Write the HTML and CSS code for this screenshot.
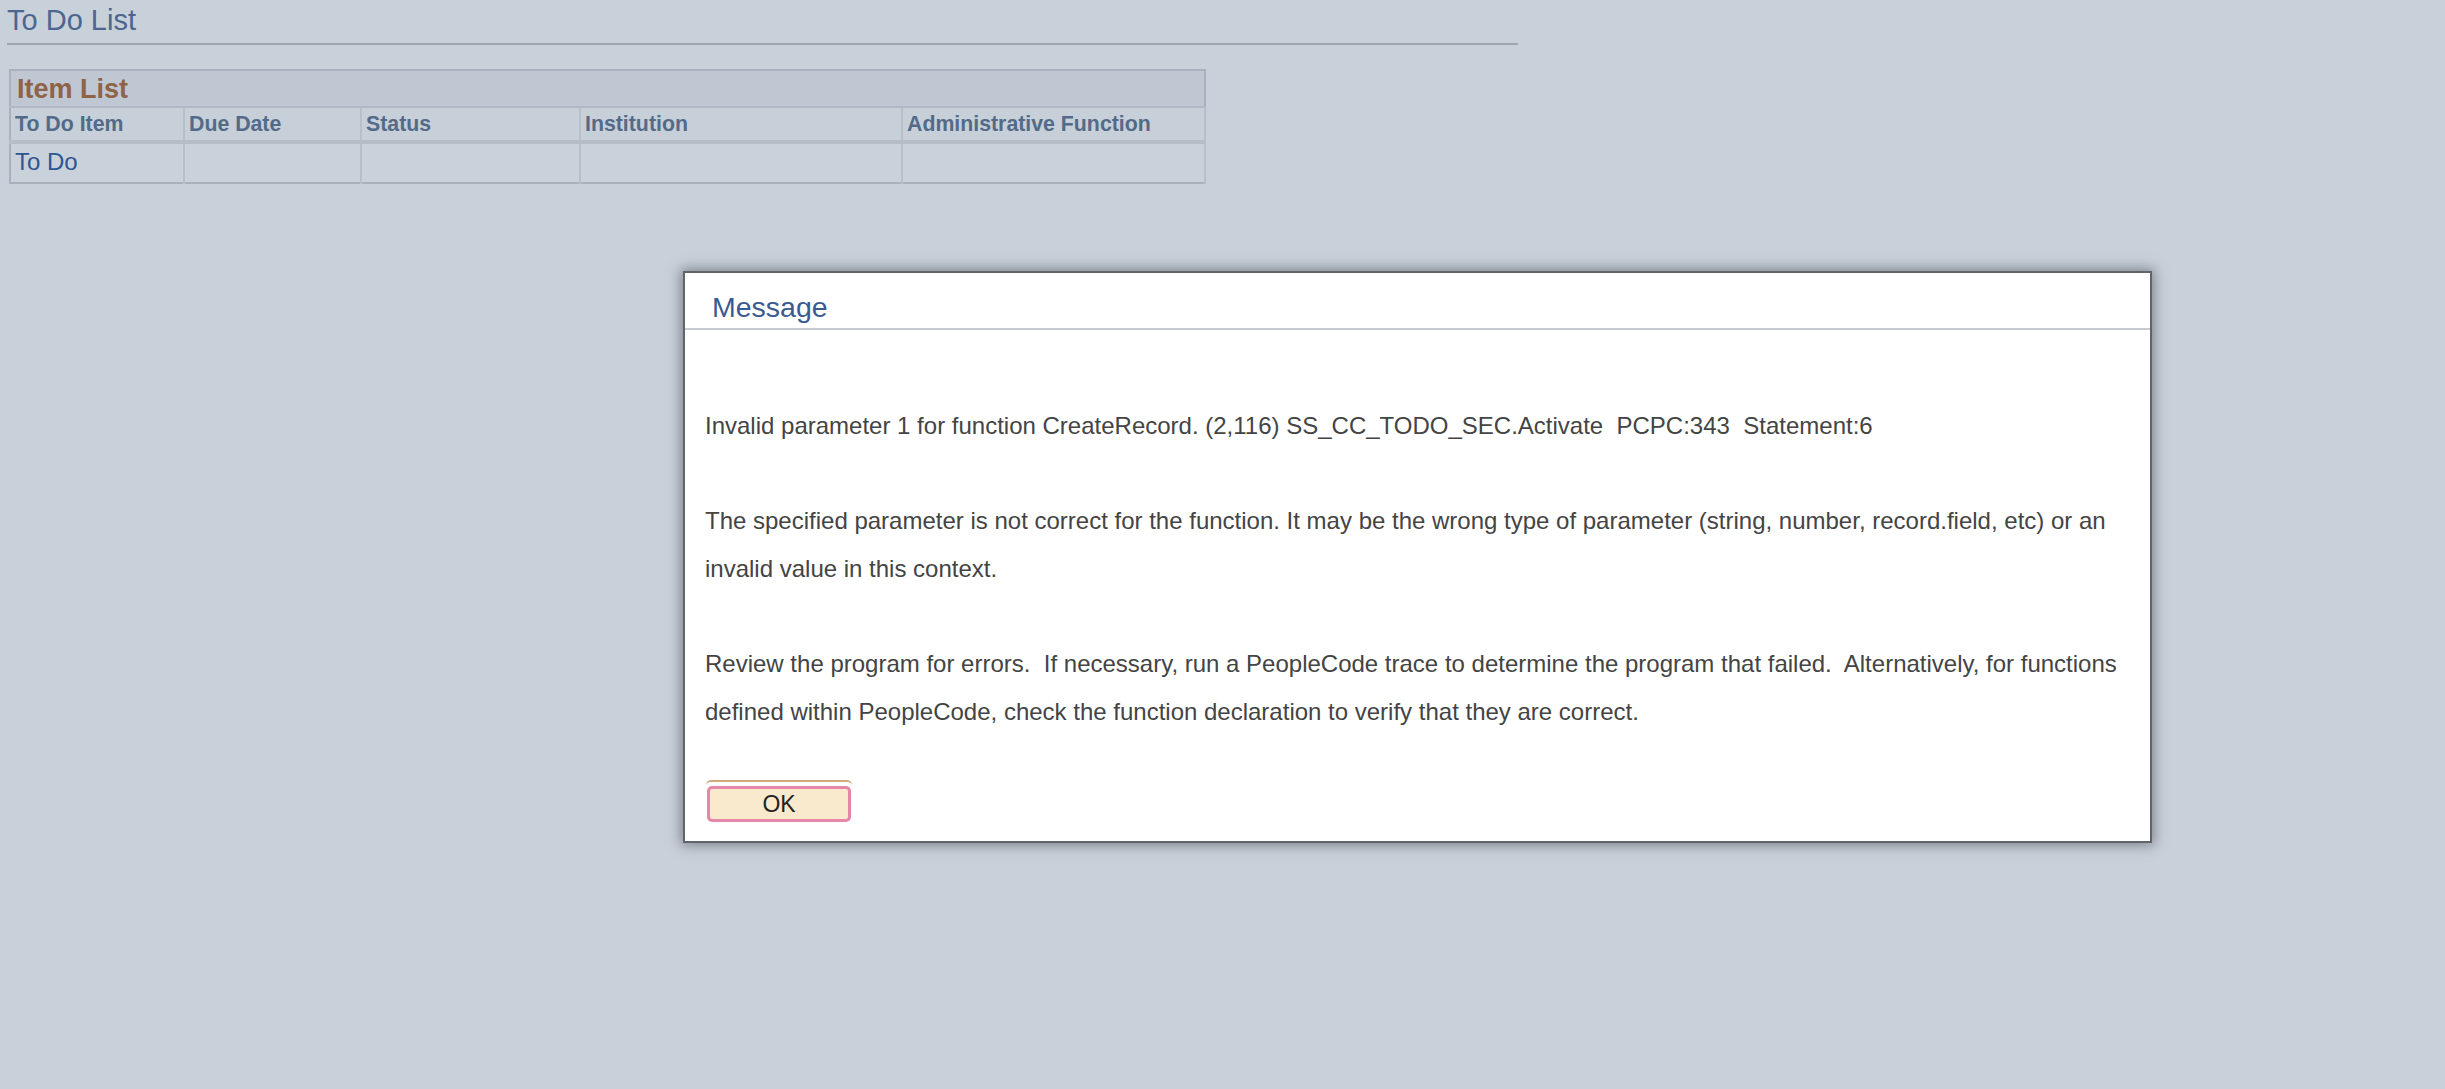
FILE: index.html
```html
<!DOCTYPE html>
<html lang="en">
<head>
<meta charset="utf-8">
<title>To Do List</title>
<link rel="stylesheet" href="styles.css">
</head>
<body>
<div class="page">
  <h1 class="page-title">To Do List</h1>
  <table class="grid">
    <colgroup>
      <col class="c1"><col class="c2"><col class="c3"><col class="c4"><col class="c5">
    </colgroup>
    <thead>
      <tr class="grid-title"><th colspan="5">Item List</th></tr>
      <tr class="grid-head">
        <th>To Do Item</th><th>Due Date</th><th>Status</th><th>Institution</th><th>Administrative Function</th>
      </tr>
    </thead>
    <tbody>
      <tr class="grid-row">
        <td><a href="#" class="link">To Do</a></td><td></td><td></td><td></td><td></td>
      </tr>
    </tbody>
  </table>
</div>

<div class="dialog" role="dialog">
  <div class="dialog-title">Message</div>
  <div class="dialog-body">
    <p class="msg">Invalid parameter 1 for function CreateRecord. (2,116) SS_CC_TODO_SEC.Activate  PCPC:343  Statement:6</p>
    <p class="msg">The specified parameter is not correct for the function. It may be the wrong type of parameter (string, number, record.field, etc) or an invalid value in this context.</p>
    <p class="msg">Review the program for errors.  If necessary, run a PeopleCode trace to determine the program that failed.  Alternatively, for functions defined within PeopleCode, check the function declaration to verify that they are correct.</p>
    <div class="btn-wrap"><button class="btn" type="button">OK</button></div>
  </div>
</div>
</body>
</html>
```
FILE: styles.css
```css
html, body {
  margin: 0;
  padding: 0;
  background: #c8d0da;
  font-family: "Liberation Sans", Arial, sans-serif;
}

.page {
  padding: 4px 0 0 7px;
}

.page-title {
  margin: 0;
  width: 1511px;
  font-size: 29px;
  font-weight: normal;
  line-height: 33px;
  color: #4d6690;
  padding-bottom: 6px;
  border-bottom: 2px solid #9ea5b0;
}

.grid {
  margin: 24px 0 0 2px;
  width: 1197px;
  table-layout: fixed;
  border-collapse: collapse;
  border: 2px solid #a9b1bc;
}

.c1 { width: 174px; }
.c2 { width: 177px; }
.c3 { width: 219px; }
.c4 { width: 322px; }
.c5 { width: auto; }

.grid-title th {
  background: #bfc7d2;
  color: #8e6346;
  font-size: 27px;
  font-weight: bold;
  text-align: left;
  height: 35px;
  padding: 0 0 0 6px;
  border-bottom: 2px solid #b1b9c4;
  line-height: 30px;
}

.grid-head th {
  background: #c7cfd9;
  color: #536a88;
  font-size: 21.3px;
  font-weight: bold;
  text-align: left;
  height: 32px;
  padding: 0 0 0 4px;
  border-right: 2px solid #b7bfc9;
  border-bottom: 4px solid #b5bdc7;
  line-height: 24px;
}

.grid-row td {
  background: #c9d1db;
  height: 36px;
  padding: 0 0 2px 4px;
  border-right: 2px solid #b7bfc9;
  font-size: 24px;
  line-height: 28px;
}

.link {
  color: #2d5591;
  text-decoration: none;
}

.dialog {
  position: absolute;
  left: 683px;
  top: 271px;
  width: 1465px;
  background: #ffffff;
  border: 2px solid #616469;
  box-shadow: 0 0 12px 2px rgba(60, 64, 72, 0.55);
}

.dialog-title {
  padding: 18px 0 4px 27px;
  font-size: 28.5px;
  line-height: 33px;
  color: #3b5a8f;
  border-bottom: 2px solid #c6cbd2;
}

.dialog-body {
  padding: 72px 20px 19px 20px;
}

.msg {
  margin: 0 0 47.7px 0;
  font-size: 24px;
  line-height: 47.7px;
  color: #444444;
  white-space: pre-wrap;
}

.msg:last-of-type {
  margin-bottom: 44px;
}

.btn-wrap {
  display: inline-block;
  margin-left: 1px;
  padding: 4px 1px 0 1px;
  border-top: 2px solid #d3aa7d;
  border-radius: 5px 5px 0 0;
}

.btn {
  display: block;
  width: 144px;
  height: 36px;
  margin: 0;
  padding: 0;
  background: #f9e9cd;
  border: 3px solid #e487ab;
  border-radius: 5px;
  font-family: "Liberation Sans", Arial, sans-serif;
  font-size: 23px;
  color: #222222;
  line-height: 28px;
}
```
